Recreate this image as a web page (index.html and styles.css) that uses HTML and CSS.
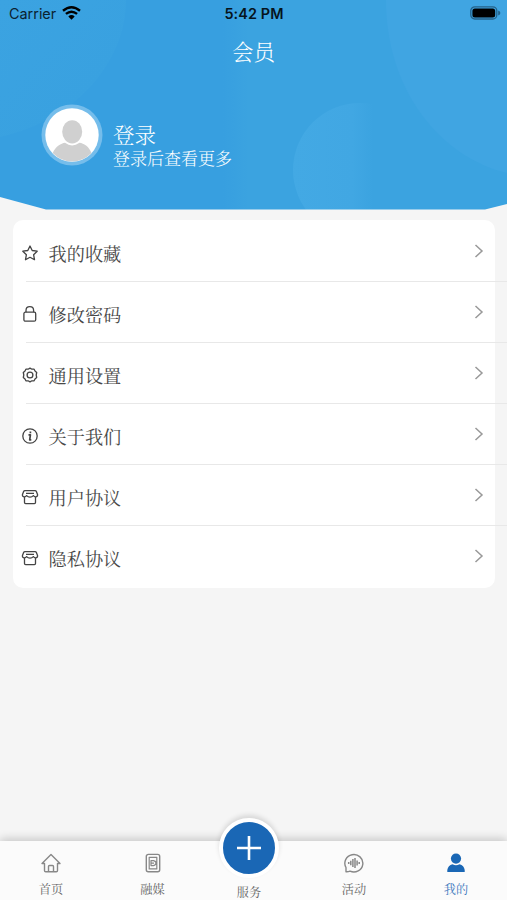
FILE: index.html
```html
<!DOCTYPE html>
<html lang="zh-CN">
<head>
    <meta charset="UTF-8">
    <meta name="viewport" content="width=device-width, initial-scale=1.0">
    <title>会员</title>
    <link rel="stylesheet" href="styles.css">
</head>
<body>
    <!-- 公用图标 -->
    <svg class="symbols" width="0" height="0">
        <symbol id="arrow" viewBox="0 0 10 16">
            <path d="M1.5 2L8 8L1.5 14"/>
        </symbol>
        <symbol id="shop" viewBox="0 0 18 18">
            <path d="M4 2.6H14Q15 2.6 15.4 3.6L16.6 6.8Q16.6 8.8 14.7 8.8Q13.2 8.8 12.4 7.6Q11 9.2 9 9.2T5.6 7.600Q4.800 8.800 3.300 8.800Q1.400 8.800 1.400 6.800L2.600 3.600Q3 2.600 4 2.600Z"/>
            <path d="M5 5.400H13M3.500 9V14.500Q3.500 15.600 4.600 15.600H13.400Q14.500 15.600 14.500 14.500V9"/>
        </symbol>
    </svg>

    <div class="page">
        <header class="header">
            <svg class="header-bg" viewBox="0 0 507 210" preserveAspectRatio="none">
                <defs>
                    <linearGradient id="sky" x1="0" x2="1">
                        <stop offset="0" stop-color="#379fe0"/>
                        <stop offset="0.44" stop-color="#379fe0"/>
                        <stop offset="0.49" stop-color="#3ba3e0"/>
                        <stop offset="1" stop-color="#3ba3e0"/>
                    </linearGradient>
                    <linearGradient id="bubble" x1="0" x2="1">
                        <stop offset="0" stop-color="#43a9e4"/>
                        <stop offset="0.44" stop-color="#41a7e3"/>
                        <stop offset="0.6" stop-color="#3ba3e0"/>
                        <stop offset="1" stop-color="#3ba3e0"/>
                    </linearGradient>
                    <linearGradient id="corner" x1="0" y1="0" x2="0.7" y2="0.7">
                        <stop offset="0" stop-color="#3ba3e1"/>
                        <stop offset="1" stop-color="#39a1e0"/>
                    </linearGradient>
                </defs>
                <rect width="507" height="210" fill="url(#sky)"/>
                <path d="M0 0H126C126 62 76 120 0 137Z" fill="url(#corner)"/>
                <circle cx="360" cy="170" r="67" fill="url(#bubble)"/>
                <path d="M386 0H507V173C440 157 386 90 386 0Z" fill="#40a5e2"/>
                <path d="M0 197L46 209.5H485L507 204V210H0Z" fill="#f5f5f5"/>
            </svg>

            <div class="status-bar">
                <div class="carrier">
                    Carrier
                    <svg width="19" height="14" viewBox="0 0 19 14">
                        <path d="M1 4.8Q9.5 -2.2 18 4.8M3.9 7.9Q9.5 3.4 15.1 7.9" fill="none" stroke="#000" stroke-width="2.4"/>
                        <path d="M6.3 10.4Q9.5 7.6 12.7 10.4L9.5 13.8Z"/>
                    </svg>
                </div>
                <div class="time">5:42 PM</div>
                <svg class="battery" width="31" height="14" viewBox="0 0 31 14">
                    <rect x="0.8" y="0.8" width="26" height="12.2" rx="4" fill="none" stroke="#246289" stroke-width="1.3"/>
                    <rect x="2.4" y="2.4" width="22.8" height="9" rx="2.5"/>
                    <path d="M28.2 4.6Q30.4 5.4 30.4 7T28.2 9.4Z" fill="#246289"/>
                </svg>
            </div>

            <h1>会员</h1>

            <div class="user">
                <svg class="avatar" width="62" height="62" viewBox="0 0 62 62">
                    <circle cx="31" cy="31" r="30.5" fill="#75bdeb"/>
                    <circle cx="31" cy="31" r="26.7" fill="#fff"/>
                    <ellipse cx="31.2" cy="27.8" rx="10" ry="11.6" fill="#d0d0d0"/>
                    <path d="M11.7 49C15 42 20 39.5 24 38.8Q31 44 38.5 38.8C43 39.5 47.5 42 50.5 49Q42 57.5 31 57.5T11.7 49Z" fill="#d0d0d0"/>
                </svg>
                <div class="user-text">
                    <div class="login">登录</div>
                    <div class="login-tip">登录后查看更多</div>
                </div>
            </div>
        </header>

        <ul class="menu">
            <li class="menu-item">
                <svg class="icon" viewBox="0 0 18 18">
                    <path d="M9 2L11.2 6.5L16.2 7.2L12.6 10.7L13.5 15.7L9 13.3L4.5 15.7L5.4 10.7L1.8 7.2L6.8 6.5Z"/>
                </svg>
                <span>我的收藏</span>
                <svg class="arrow"><use href="#arrow"/></svg>
            </li>
            <li class="menu-item">
                <svg class="icon" viewBox="0 0 18 18">
                    <rect x="2.9" y="7.2" width="11.8" height="9" rx="1.5"/>
                    <path d="M5 7.2V5.5Q5 1.7 8.8 1.7T12.6 5.5V7.2"/>
                </svg>
                <span>修改密码</span>
                <svg class="arrow"><use href="#arrow"/></svg>
            </li>
            <li class="menu-item">
                <svg class="icon" viewBox="0 0 18 18">
                    <path d="M9 2.1L10.9 3.2H13.1L14 5L15.7 6.5L15.2 9L15.7 11.5L14 13L13.1 14.8H10.9L9 15.9L7.1 14.8H4.9L4 13L2.3 11.5L2.8 9L2.3 6.5L4 5L4.900 3.200H7.100Z"/>
                    <circle cx="9" cy="9" r="2.9"/>
                </svg>
                <span>通用设置</span>
                <svg class="arrow"><use href="#arrow"/></svg>
            </li>
            <li class="menu-item">
                <svg class="icon" viewBox="0 0 18 18">
                    <circle cx="9" cy="9" r="7.2"/>
                    <path d="M7.5 7.8H9.4L8.7 12.8H10.3M9.4 4.6V6.2" stroke-width="1.7"/>
                </svg>
                <span>关于我们</span>
                <svg class="arrow"><use href="#arrow"/></svg>
            </li>
            <li class="menu-item">
                <svg class="icon"><use href="#shop"/></svg>
                <span>用户协议</span>
                <svg class="arrow"><use href="#arrow"/></svg>
            </li>
            <li class="menu-item">
                <svg class="icon"><use href="#shop"/></svg>
                <span>隐私协议</span>
                <svg class="arrow"><use href="#arrow"/></svg>
            </li>
        </ul>

        <nav class="tab-bar">
            <div class="tab">
                <svg viewBox="0 0 20 20">
                    <path d="M1 10.5L10 1.5L19 10.5H16.5V17.5Q16.5 18.7 15.3 18.7H4.7Q3.5 18.7 3.5 17.5V10.5ZM7.5 18.5V13.5Q7.5 12.5 8.5 12.5H11.5Q12.5 12.5 12.5 13.5V18.5"/>
                </svg>
                <span>首页</span>
            </div>
            <div class="tab">
                <svg viewBox="0 0 20 20">
                    <rect x="3.3" y="1.4" width="13.4" height="17.4" rx="2"/>
                    <path d="M6.2 4.3H13.8V15.9H6.2ZM8 7.6H10.5Q13 8 13 10.1T10.5 12.6H8ZM8 10.1H11" stroke-width="1.2"/>
                </svg>
                <span>融媒</span>
            </div>
            <div class="tab tab-center">
                <div class="plus">
                    <svg viewBox="0 0 26 26"><path d="M13 1V25M1 13H25"/></svg>
                </div>
                <span>服务</span>
            </div>
            <div class="tab">
                <svg viewBox="0 0 20 20">
                    <path d="M2 18.7V14.5A9 8.7 0 1 1 6 18.1Q4 18.9 2 18.7Z"/>
                    <path d="M4.7 9V11M6.8 7.7V12.3M8.9 6V14M11 5V15M13.1 7.5V12.5M15.2 9V11" stroke-width="1.5"/>
                </svg>
                <span>活动</span>
            </div>
            <div class="tab active">
                <svg viewBox="0 0 20 20">
                    <circle cx="10" cy="5.6" r="5.1"/>
                    <path d="M1.3 19V17Q2 12.2 6.5 11.2Q10 13.2 13.5 11.2Q18 12.2 18.7 17V19Z"/>
                </svg>
                <span>我的</span>
            </div>
        </nav>
    </div>
</body>
</html>
```
FILE: styles.css
```css
* {
    margin: 0;
    padding: 0;
    box-sizing: border-box;
}

body {
    background-color: #f5f5f5;
    font-family: "Noto Serif CJK SC", "Noto Sans CJK SC", serif;
    font-weight: 400;
}

.symbols {
    position: absolute;
}

.page {
    height: 900px;
    display: flex;
    flex-direction: column;
    overflow: hidden;
}

.header {
    position: relative;
    height: 210px;
    color: #fff;
}

/* 头部背景 */
.header-bg {
    position: absolute;
    left: 0;
    top: 0;
    width: 100%;
    height: 210px;
    z-index: -1;
}

.status-bar {
    display: grid;
    grid-template-columns: 1fr auto 1fr;
    align-items: center;
    height: 27px;
    padding: 0 6px 0 9px;
    color: #0b2230;
    font: 14.4px "Inter", sans-serif;
}

.carrier {
    display: flex;
    align-items: center;
    gap: 6px;
}

.carrier svg {
    margin-top: -2px;
}

.time {
    color: #06141d;
    font-weight: 600;
    letter-spacing: 0.1px;
    margin-left: -2px;
}

.battery {
    justify-self: end;
    margin-top: -1px;
}

h1 {
    height: 47px;
    line-height: 47px;
    text-align: center;
    font-size: 21.5px;
    font-weight: 300;
}

.user {
    display: flex;
    margin: 30px 0 0 41px;
}

.user-text {
    margin: 16px 0 0 10px;
    font-weight: 300;
}

.login {
    font-size: 21.5px;
    line-height: 28px;
}

.login-tip {
    font-size: 17px;
    line-height: 20px;
}

.menu {
    margin: 10px 12px 0 13px;
    height: 368px;
    border-radius: 10px;
    background-color: #fff;
    list-style: none;
}

.menu-item {
    display: flex;
    align-items: center;
    height: 61.1px;
    margin: 0 -12px 0 13px;
    padding: 3px 23px 0 0;
    color: #484848;
    font-size: 18.2px;
    border-bottom: 1px solid #e8e8e8;
}

.menu-item:first-child {
    height: 62px;
    padding-top: 4px;
}

.menu-item:last-child {
    border-bottom: none;
}

.icon {
    width: 18px;
    height: 18px;
    margin: 0 10px 0 -5.5px;
    fill: none;
    stroke: #444;
    stroke-width: 1.3;
    stroke-linejoin: round;
}

.arrow {
    width: 10px;
    height: 16px;
    margin: -4px 0 0 auto;
    fill: none;
    stroke: #999;
    stroke-width: 1.5;
}

/* 底部导航 */
.tab-bar {
    display: grid;
    grid-template-columns: 102px 101px 92px 118px 86px;
    height: 59px;
    margin-top: auto;
    background-color: #fbfbfb;
    box-shadow: 0 -2px 9px rgba(0, 0, 0, 0.2);
}

.tab {
    display: flex;
    flex-direction: column;
    align-items: center;
    padding-top: 12px;
    color: #666;
    font-size: 12.2px;
    line-height: 16px;
}

.tab > svg {
    width: 20px;
    height: 20px;
    margin-bottom: 8px;
    fill: none;
    stroke: #888;
    stroke-width: 1.4;
    stroke-linejoin: round;
}

.tab-center {
    padding-top: 0;
}

.plus {
    display: flex;
    justify-content: center;
    align-items: center;
    width: 60px;
    height: 60px;
    margin: -23px 0 6px;
    border: 4px solid #fff;
    border-radius: 50%;
    background-color: #1a67b5;
    box-shadow: 0 -3px 5px rgba(0, 0, 0, 0.12);
}

.plus svg {
    width: 26px;
    height: 26px;
    stroke: #fff;
    stroke-width: 2.6;
}

.tab.active {
    color: #3b78bd;
}

.tab.active > svg {
    fill: #1a67b5;
    stroke: none;
}
```
